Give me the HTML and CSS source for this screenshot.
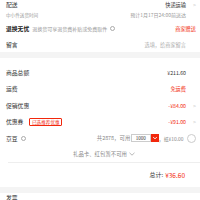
FILE: index.html
```html
<!DOCTYPE html>
<html lang="zh">
<head>
<meta charset="utf-8">
<link rel="stylesheet" href="styles.css">
</head>
<body>
<div class="page">
  <section class="card">
    <div class="row r-top">
      <span class="title">配送</span>
      <span class="right dark">快递运输</span>
      <span class="arrow">&gt;</span>
    </div>
    <div class="row r-sub">
      <span class="sub">中小件送货时间</span>
      <span class="subr right">预计1月17日24:00前送达</span>
      <span class="arrow"></span>
    </div>
    <div class="row r-mid">
      <span class="title bold">退换无忧</span>
      <span class="sub2">退换货可享退货费补贴或免费取件</span>
      <span class="info"></span>
      <span class="right red">商家赠送</span>
    </div>
    <div class="row r-mid">
      <span class="title">留言</span>
      <span class="right gray">选填，给商家留言</span>
      <span class="arrow"></span>
    </div>
  </section>
  <div class="band"></div>
  <section class="card list">
    <div class="row line">
      <span class="title">商品总额</span>
      <span class="right dark">¥211.60</span>
      <span class="arrow"></span>
    </div>
    <div class="row line">
      <span class="title">运费</span>
      <span class="right red">免运费</span>
      <span class="arrow"></span>
    </div>
    <div class="row line">
      <span class="title">促销优惠</span>
      <span class="right red">-¥84.00</span>
      <span class="arrow">&gt;</span>
    </div>
    <div class="row line">
      <span class="title">优惠券</span>
      <span class="badge">已选推荐优惠</span>
      <span class="right red">-¥91.00</span>
      <span class="arrow">&gt;</span>
    </div>
    <div class="row line">
      <span class="title">京豆</span>
      <span class="info"></span>
      <span class="right sub3">共2878，可用</span>
      <span class="input">1000</span>
      <span class="drop"><svg viewBox="0 0 8 8" width="8" height="8"><path d="M2.2 3 L4 4.9 L5.8 3" fill="none" stroke="#fff" stroke-width="0.9"/></svg></span>
      <span class="sub4">，抵¥10.00</span>
      <span class="radio"></span>
    </div>
    <div class="row gift">
      <span class="sub3">礼品卡、红包暂不可用</span>
      <svg class="chev" viewBox="0 0 6 4" width="6" height="4"><path d="M0.5 0.8 L3 3.2 L5.5 0.8" fill="none" stroke="#999" stroke-width="0.7"/></svg>
    </div>
    <div class="total">
      <span class="tlabel">总计:</span>
      <span class="tval">¥36.60</span>
    </div>
  </section>
  <div class="band"></div>
  <section class="card bottom">
    <div class="row"><span class="title">发票</span></div>
  </section>
</div>
</body>
</html>
```
FILE: styles.css
```css
* { box-sizing: border-box; margin: 0; padding: 0; }
body {
  margin: 0;
  background: #fff;
  font-family: "Noto Sans CJK SC", "Noto Sans", sans-serif;
  color: #333;
  width: 200px;
  height: 200px;
  overflow: hidden;
}
.page { display: flex; flex-direction: column; }
.card { padding: 0 4px 0 6px; background: #fff; }
.row { display: flex; align-items: center; white-space: nowrap; }
.r-top { height: 9px; }
.r-sub { height: 11px; }
.r-mid { height: 16px; }
.title { font-size: 5.8px; color: #333; }
.bold { font-weight: 700; color: #222; }
.right { margin-left: auto; }
.dark { font-size: 5.2px; color: #333; }
.red { font-size: 5.2px; color: #f2270c; }
.gray { font-size: 5.2px; color: #aaa; }
.sub { font-size: 4.6px; color: #999; }
.subr { font-size: 5px; color: #999; }
.sub2 { font-size: 5px; color: #999; margin-left: 3px; }
.sub3 { font-size: 5.4px; color: #888; }
.sub4 { font-size: 4.9px; color: #888; }
.arrow { font-size: 5px; color: #bbb; width: 10px; text-align: right; }
.info {
  width: 5px; height: 5px; border: 0.6px solid #aaa; border-radius: 50%;
  margin-left: 3px;
}
.band { height: 6px; background: #f4f4f4; }
.list { padding-top: 6px; }
.line { height: 16.5px; }
.badge {
  font-size: 4.6px; color: #f2270c; border: 0.6px solid #f2270c;
  border-radius: 1px; padding: 0 1.6px; margin-left: 6px; line-height: 6px;
}
.input {
  font-size: 4.6px; color: #333; border: 0.6px solid #ccc;
  width: 20px; height: 8px; line-height: 7px; text-align: center; margin-left: 0.5px;
}
.drop {
  width: 8px; height: 8px; background: #f2270c; display: flex;
  align-items: center; justify-content: center;
}
.radio {
  width: 9.5px; height: 9.5px; border: 0.6px solid #ccc; border-radius: 50%;
  margin-left: 3px;
}
.gift { justify-content: center; height: 16px; gap: 2px; border-bottom: 0.5px solid #eee; margin: 0 -4px 0 2px; }
.total { display: flex; justify-content: flex-end; align-items: center; height: 24px; padding-right: 11px; white-space: nowrap; gap: 2px; }
.tlabel { font-size: 6px; color: #333; }
.tval { font-size: 6.5px; color: #f2270c; }
.bottom .row { height: 10px; }
```
